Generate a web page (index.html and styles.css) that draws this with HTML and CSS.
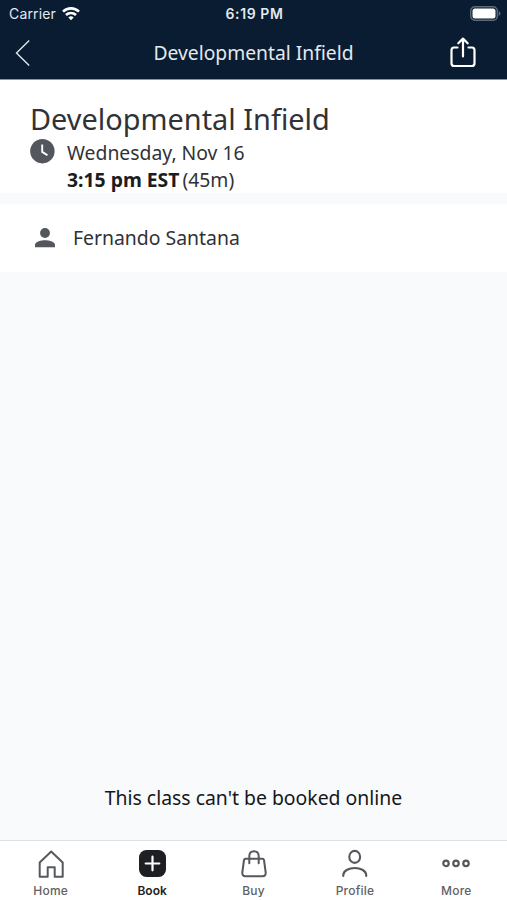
FILE: index.html
```
<!DOCTYPE html>
<html lang="en">
<head>
    <meta charset="UTF-8">
    <title>Developmental Infield</title>
    <link rel="stylesheet" href="styles.css">
</head>
<body>
    <div id="app">
        <header>
            <div class="status">
                <div class="carrier">
                    <span>Carrier</span>
                    <svg width="18" height="14" viewBox="0 0 18 14" fill="none" stroke="#fff" stroke-width="2.6">
                        <path d="M1 4.700C5.500 .2 12.500 .2 17 4.700"/>
                        <path d="M4 8C6.800 5.300 11.200 5.300 14 8"/>
                        <path d="M6.300 10.400Q9 8 11.700 10.400L9 13.200Z" fill="#fff" stroke="none"/>
                    </svg>
                </div>
                <div class="time">6:19 PM</div>
                <svg class="battery" width="31" height="15" viewBox="0 0 31 15">
                    <rect x=".7" y=".7" width="26.600" height="13.600" rx="4.200" fill="none" stroke="#5f6b7b" stroke-width="1.400"/>
                    <rect x="2.500" y="2.500" width="23" height="10" rx="2.500" fill="#fff"/>
                    <path d="M28.700 5V10Q30.500 9.300 30.500 7.500T28.700 5Z" fill="#5f6b7b"/>
                </svg>
            </div>
            <div class="bar">
                <svg width="16" height="28" viewBox="0 0 16 28" fill="none" stroke="#dfe6ee" stroke-width="1.400">
                    <path d="M14.200 1.500L1.500 14L14.200 26.500"/>
                </svg>
                <div class="bar-title">Developmental Infield</div>
                <svg class="share" width="28" height="32" viewBox="0 0 28 32" fill="none" stroke="#fff" stroke-width="2.200" stroke-linecap="round" stroke-linejoin="round">
                    <path d="M8.500 10.500H5Q2.500 10.500 2.500 13.300V26.200Q2.500 29 5.300 29H22.700Q25.500 29 25.500 26.200V13.300Q25.500 10.500 23 10.500H19.500"/>
                    <path d="M14 19.500V2M9.300 6.300L14 1.600L18.700 6.300"/>
                </svg>
            </div>
        </header>
        <section class="info">
            <h1>Developmental Infield</h1>
            <div class="when">
                <svg width="25" height="25" viewBox="0 0 25 25">
                    <circle cx="12.400" cy="12.200" r="12.200" fill="#53565c"/>
                    <path d="M12.200 5.500V12.900L17.500 16.200" fill="none" stroke="#fff" stroke-width="1.900"/>
                </svg>
                <div class="date">
                    <div>Wednesday, Nov 16</div>
                    <div><b>3:15 pm EST</b><span class="length">(45m)</span></div>
                </div>
            </div>
        </section>
        <section class="staff">
            <svg width="20" height="20" viewBox="0 0 20 20" fill="#53565c">
                <circle cx="10" cy="5" r="4.900"/>
                <path d="M0 19.300V17C0 13.700 6.500 12.300 10 12.300S20 13.700 20 17V19.300Z"/>
            </svg>
            <span class="name">Fernando Santana</span>
        </section>
        <main>
            <p>This class can't be booked online</p>
        </main>
        <nav>
            <div class="tab">
                <svg width="30" height="30" viewBox="0 0 30 30" fill="none" stroke="#55585c" stroke-width="2" stroke-linejoin="round">
                    <path d="M3.700 12.400L15.200 1.600L26.700 12.400V26.700H18.700V17.200H11.700V26.700H3.700Z"/>
                </svg>
                <span>Home</span>
            </div>
            <div class="tab selected">
                <svg width="30" height="30" viewBox="0 0 30 30">
                    <rect x="2" y="0" width="27" height="27" rx="7.500" fill="#1d1f22"/>
                    <path d="M15.500 6.700V20.300M8.700 13.500H22.300" stroke="#fff" stroke-width="2.200" stroke-linecap="round"/>
                </svg>
                <span>Book</span>
            </div>
            <div class="tab">
                <svg width="30" height="30" viewBox="0 0 30 30" fill="none" stroke="#55585c" stroke-width="2" stroke-linecap="round" stroke-linejoin="round">
                    <path d="M6.500 8.700H23.500Q24.700 8.700 25 10L26.700 22.500Q27 26.200 23.500 26.200H6.500Q3 26.200 3.300 22.500L5 10Q5.300 8.700 6.500 8.700Z"/>
                    <path d="M10.300 13.300V6.300Q10.300 1.200 15 1.200T19.700 6.300V13.300"/>
                </svg>
                <span>Buy</span>
            </div>
            <div class="tab">
                <svg width="30" height="30" viewBox="0 0 30 30" fill="none" stroke="#55585c" stroke-width="2.100" stroke-linecap="round">
                    <ellipse cx="14.700" cy="6.900" rx="5.400" ry="6"/>
                    <path d="M3.300 26V24.900C4 15.700 25.500 15.700 26.200 24.900V26"/>
                </svg>
                <span>Profile</span>
            </div>
            <div class="tab">
                <svg width="30" height="30" viewBox="0 0 30 30" fill="none" stroke="#55585c" stroke-width="2.200">
                    <circle cx="5" cy="13.400" r="2.700"/>
                    <circle cx="15" cy="13.400" r="2.700"/>
                    <circle cx="25" cy="13.400" r="2.700"/>
                </svg>
                <span>More</span>
            </div>
        </nav>
    </div>
</body>
</html>
```
FILE: styles.css
```
*{
    margin: 0;
    padding: 0;
    box-sizing: border-box;
}
svg{
    display: block;
    flex: none;
    overflow: visible;
}
body{
    font-family: "Noto Sans", sans-serif;
    color: #303236;
}
#app{
    width: 507px;
    height: 900px;
    display: flex;
    flex-direction: column;
    background: #f8fafc;
}
header{
    height: 80px;
    background: #091c31;
    border-bottom: 1px solid #8494a5;
    color: #e3e9f0;
}
.status{
    height: 27px;
    padding: 0 7px 0 9px;
    display: grid;
    grid-template-columns: 1fr auto 1fr;
    align-items: center;
    font-family: Inter, sans-serif;
    font-size: 14px;
}
.carrier{
    display: flex;
    align-items: center;
    gap: 6px;
    letter-spacing: .15px;
}
.time{
    font-weight: 600;
    letter-spacing: .6px;
}
.battery{
    justify-self: end;
    margin-right: -1px;
}
.bar{
    height: 52px;
    padding: 0 30px 0 15px;
    display: grid;
    grid-template-columns: 1fr auto 1fr;
    align-items: center;
}
.bar-title{
    font-size: 19.3px;
    line-height: 26px;
    padding-left: 15px;
}
.share{
    justify-self: end;
}
.info{
    height: 113px;
    padding: 19px 30px 0;
    background: #fff;
}
h1{
    font-size: 28.9px;
    line-height: 40px;
    font-weight: 400;
}
.when{
    display: flex;
    gap: 12px;
}
.date{
    font-size: 19.35px;
    line-height: 27px;
}
.date b{
    color: #1b1d20;
}
.length{
    margin-left: 3px;
}
.staff{
    height: 68px;
    margin-top: 11px;
    padding-left: 35px;
    display: flex;
    align-items: center;
    gap: 18px;
    background: #fff;
    font-size: 19.4px;
}
.name{
    padding-bottom: 2px;
}
main{
    flex: 1;
    display: flex;
    align-items: flex-end;
    justify-content: center;
    padding-bottom: 29px;
    font-size: 19.4px;
    line-height: 26px;
    color: #15171a;
}
nav{
    height: 60px;
    padding-top: 9px;
    border-top: 1px solid #dfe2e5;
    background: #fff;
    display: flex;
}
.tab{
    flex: 1;
    display: flex;
    flex-direction: column;
    align-items: center;
    gap: 3px;
    font-family: Inter, sans-serif;
    font-size: 12px;
    line-height: 16px;
    font-weight: 500;
    letter-spacing: .2px;
    color: #606266;
}
.tab.selected{
    color: #222;
    font-weight: 600;
    letter-spacing: 0;
}
```
